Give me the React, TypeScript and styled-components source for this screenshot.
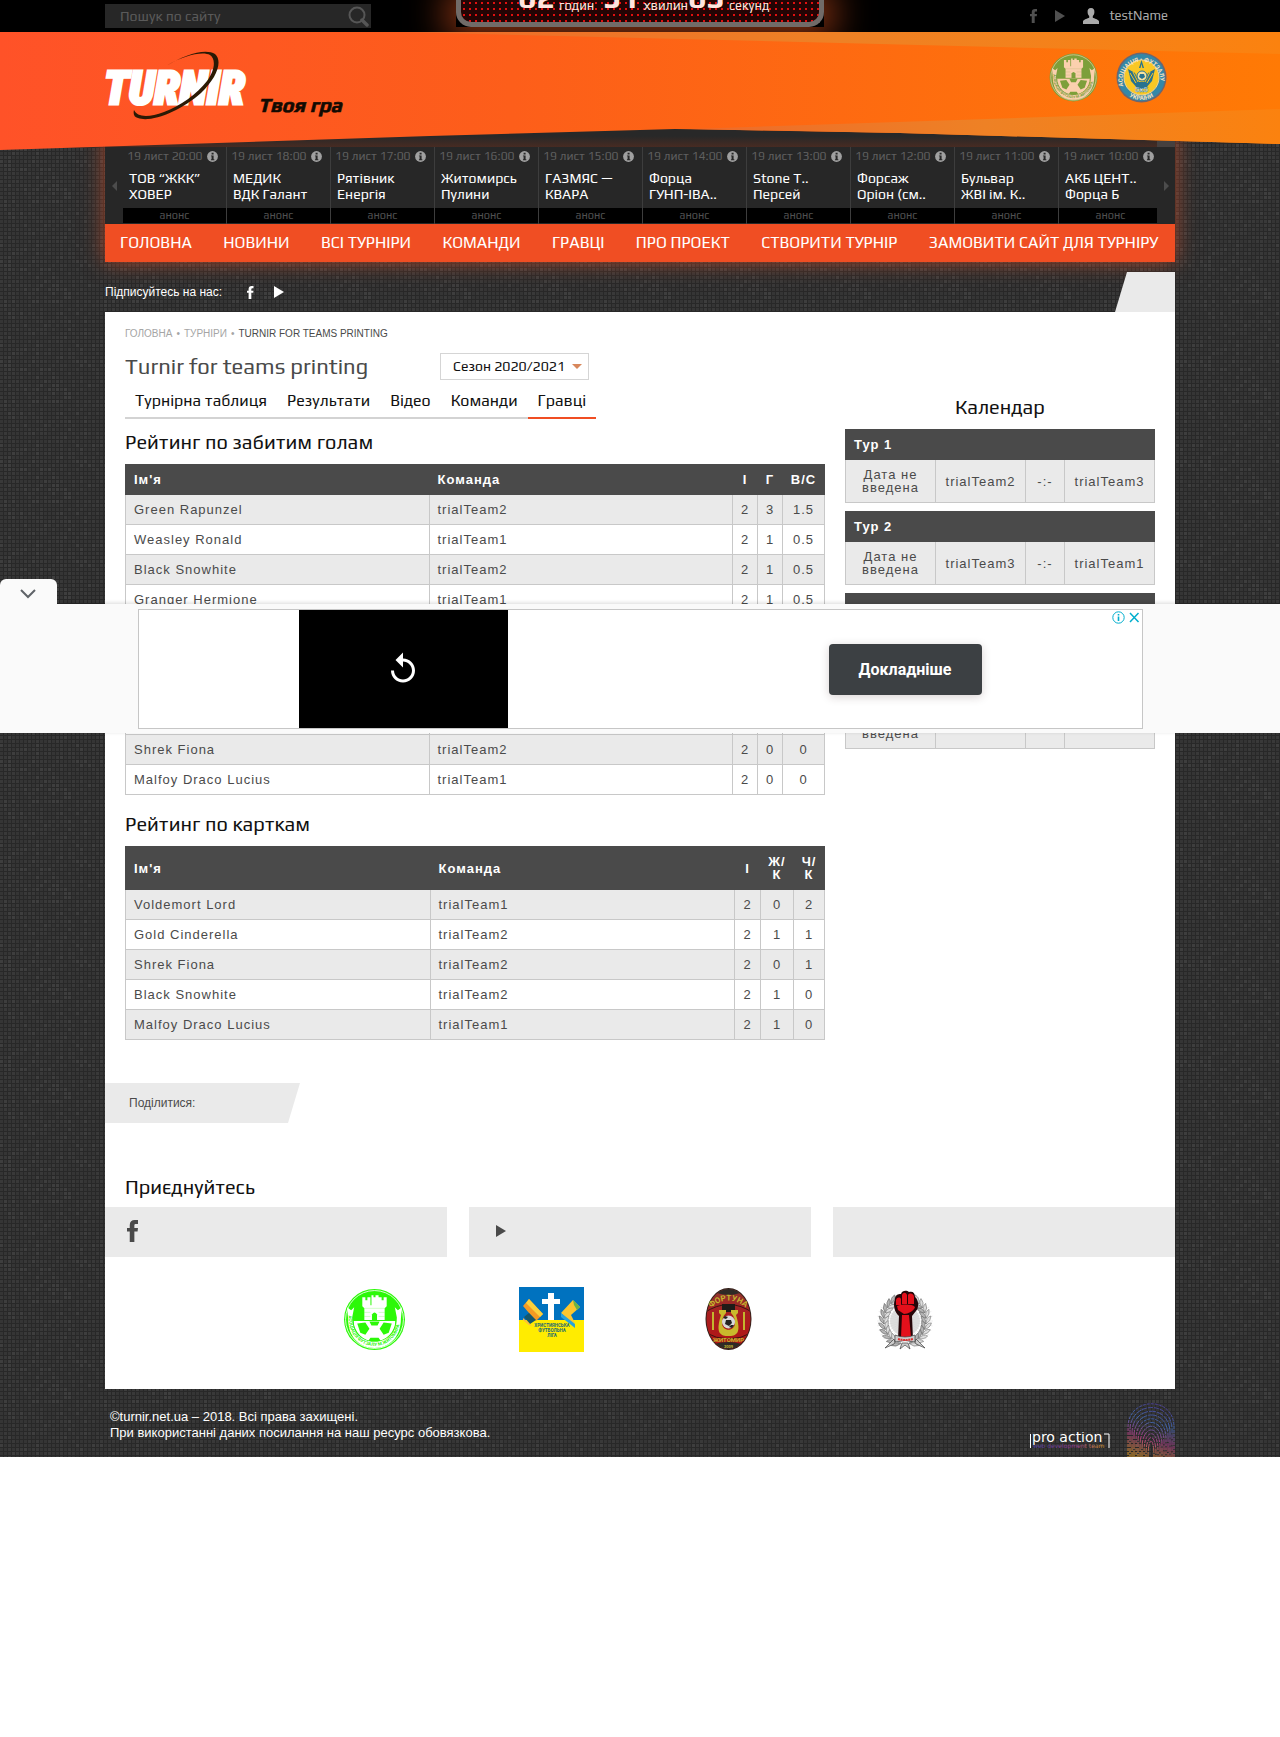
import React from "react";
import styled, { createGlobalStyle } from "styled-components";

const play = `Play, Roboto, "Noto Sans", sans-serif`;
const arial = `"Liberation Sans", Arial, sans-serif`;

/* Woven dark backdrop: 3px cells on a 4px grid, some of them lighter */
const weave = (() => {
  let cells = "";
  let seed = 7;
  for (let y = 0; y < 100; y += 4) {
    for (let x = 0; x < 100; x += 4) {
      seed = (seed * 1103515245 + 12345) % 2147483648;
      const n = (seed >> 12) % 10;
      const tone = n === 0 ? "#3e3e3e" : n < 4 ? "#393939" : "#353535";
      cells += `<rect x='${x}' y='${y}' width='3' height='3' fill='${tone}'/>`;
    }
  }
  const svg = `<svg xmlns='http://www.w3.org/2000/svg' width='100' height='100'><rect width='100' height='100' fill='#282828'/>${cells}</svg>`;
  return `url("data:image/svg+xml,${encodeURIComponent(svg).replace(/'/g, "%27")}")`;
})();

const Global = createGlobalStyle`
  *, *::before, *::after { box-sizing: border-box; }
  body { margin: 0; background: #fff; font-family: ${arial}; color: #4a4a4a; }
  a { color: inherit; text-decoration: none; }
  button { border: 0; padding: 0; background: none; cursor: pointer; }
  svg { display: block; }
`;

const Page = styled.div`
  position: relative;
  background: #2f2f2f ${weave};
`;

const Container = styled.div`
  width: 100%;
  max-width: 1070px;
  margin: 0 auto;
`;

/* ---------- top bar ---------- */
const TopBar = styled.div`
  position: relative;
  height: 32px;
  background: #000;
  overflow: hidden;
`;
const TopRow = styled(Container)`
  display: flex;
  justify-content: space-between;
  align-items: center;
  height: 32px;
`;
const Search = styled.form`
  display: flex;
  align-items: center;
  width: 266px;
  height: 24px;
  padding: 0 2px 0 15px;
  background: #272727;
`;
const SearchInput = styled.input`
  flex: 1;
  min-width: 0;
  padding: 0;
  border: 0;
  outline: 0;
  background: none;
  font: 14px/24px ${play};
  color: #aaa;
  &::placeholder { color: #5a5a5a; opacity: 1; }
`;
const UserLinks = styled.div`
  display: flex;
  align-items: center;
  gap: 18px;
  padding-right: 7px;
  color: #505050;
`;
const UserName = styled.a`
  display: flex;
  align-items: center;
  gap: 10px;
  font: 13px/24px ${play};
  color: #aaa;
`;
const Countdown = styled.div`
  position: absolute;
  top: 0;
  left: 50%;
  width: 368px;
  height: 27px;
  margin-left: -184px;
  background: #000;
  box-shadow: 0 0 36px 10px #8a3413;
`;
const Board = styled.div`
  height: 27px;
  padding: 0 0 0 57px;
  border: solid #716b68;
  border-width: 0 5px 5px;
  border-radius: 0 0 15px 15px;
  background: #240404 radial-gradient(circle, #e01010 0 1px, transparent 1px) 0 0 / 6px 6px;
  display: grid;
  grid-template-columns: repeat(3, 85px);
  align-items: end;
`;
const Unit = styled.div`
  display: flex;
  align-items: flex-end;
  height: 22px;
  color: #ffe4de;
  white-space: nowrap;
`;
const Digits = styled.b`
  width: 41px;
  height: 41px;
  font: bold 32px/32px ${play};
`;
const UnitName = styled.span`
  font: 13px/15px ${play};
  height: 24px;
`;

/* ---------- header ---------- */
const Header = styled.header`
  position: relative;
  z-index: 1;
  height: 118px;
  margin-bottom: -21px;
`;
const Ribbon = styled.svg`
  position: absolute;
  inset: 0;
  width: 100%;
  height: 100%;
`;
const HeaderRow = styled(Container)`
  position: relative;
  display: flex;
  justify-content: space-between;
  align-items: flex-start;
  padding: 19px 8px 0 0;
`;
const Emblems = styled.div`
  display: flex;
  gap: 17px;
  padding-top: 1px;
`;

/* ---------- ticker and navigation ---------- */
const Glow = styled(Container)`
  box-shadow: 0 0 20px rgba(240, 84, 40, 0.6);
`;
const TickerTop = styled.div`
  height: 18px;
  background:
    linear-gradient(#45403f 0 0) right bottom / 18px 6px no-repeat,
    linear-gradient(#282828 40%, #472b22);
`;
const Ticker = styled.div`
  display: grid;
  grid-template-columns: 18px minmax(0, 1fr) 18px;
  height: 77px;
  background: #272727;
`;
const Arrow = styled.button`
  display: grid;
  place-items: center;
  color: #4c4c4c;
`;
const Games = styled.div`
  display: flex;
  overflow: hidden;
`;
const Game = styled.a`
  flex: 0 0 104px;
  width: 104px;
  border-right: 1px solid #3d3d3d;
  font-family: ${play};
`;
const GameDate = styled.div`
  display: flex;
  align-items: center;
  justify-content: space-between;
  height: 18px;
  padding: 0 8px 0 4px;
  font-size: 12px;
  line-height: 18px;
  color: #5f5f5f;
  white-space: nowrap;
`;
const Sides = styled.div`
  height: 43px;
  padding: 5px 0 0 6px;
  font-size: 14px;
  line-height: 16px;
  color: #fff;
  white-space: pre;
`;
const Announce = styled.div`
  height: 15px;
  background: #000;
  font-size: 11px;
  line-height: 14px;
  text-align: center;
  color: #505050;
`;
const Nav = styled.nav`
  display: flex;
  justify-content: space-between;
  height: 38px;
  padding: 0 17px 0 15px;
  background: #f04e23;
  font: 16px/37px ${play};
  color: #fff;
  white-space: nowrap;
`;

const Follow = styled(Container)`
  display: flex;
  align-items: flex-end;
  justify-content: space-between;
  height: 50px;
  font-size: 12px;
  color: #fff;
`;
const FollowLinks = styled.div`
  display: flex;
  align-items: center;
  gap: 20px;
  height: 40px;
`;
const FollowText = styled.span`
  margin-right: 5px;
`;
const Corner = styled.div`
  width: 60px;
  height: 40px;
  background: #eaeaea;
  clip-path: polygon(12px 0, 100% 0, 100% 100%, 0 100%);
`;

/* ---------- content ---------- */
const Content = styled(Container)`
  padding-top: 16px;
  background: #fff;
`;
const Crumbs = styled.nav`
  display: flex;
  gap: 4px;
  padding: 0 20px;
  margin-bottom: 13px;
  font-size: 10px;
  line-height: 12px;
  color: #a5a5a5;
  text-transform: uppercase;
`;
const Current = styled.span`
  color: #4a4a4a;
`;
const Columns = styled.div`
  display: grid;
  grid-template-columns: minmax(0, 1fr) 310px;
  gap: 20px;
  align-items: start;
  padding: 0 20px;
`;
const TitleRow = styled.div`
  display: grid;
  grid-template-columns: 315px auto;
  justify-content: start;
  align-items: start;
  height: 27px;
  margin-bottom: 6px;
`;
const Title = styled.h1`
  margin: 0;
  font: 22px/26px ${play};
  color: #4a4a4a;
  white-space: nowrap;
`;
const Season = styled.label`
  position: relative;
  display: flex;
  align-items: center;
  width: 149px;
  height: 27px;
  border: 1px solid #d5d5d5;
`;
const SeasonSelect = styled.select`
  width: 100%;
  height: 25px;
  padding: 0 0 0 12px;
  border: 0;
  appearance: none;
  background: none;
  font: 14px/25px ${play};
  color: #111;
`;
const Caret = styled.svg`
  position: absolute;
  right: 6px;
  pointer-events: none;
`;
const Tabs = styled.nav`
  display: flex;
  font: 16px/29px ${play};
  color: #111;
`;
const Tab = styled.a<{ $active?: boolean }>`
  padding: 0 10px 2px;
  border-bottom: 2px solid ${(p) => (p.$active ? "#f04e23" : "#d3d3d3")};
`;
const Heading = styled.h2<{ $center?: boolean; $top?: number }>`
  margin: ${(p) => p.$top || 0}px 0 0;
  font: 20px/45px ${play};
  color: #111;
  text-align: ${(p) => (p.$center ? "center" : "left")};
`;
const Table = styled.table`
  width: 100%;
  table-layout: fixed;
  border-collapse: collapse;
  font-size: 13px;
  line-height: 13px;
  letter-spacing: 1px;
  & + & { margin-top: 8px; }
  tbody tr:nth-child(odd) { background: #eaeaea; }
`;
const Th = styled.th<{ $left?: boolean }>`
  padding: 8px ${(p) => (p.$left ? 8 : 3)}px;
  border: 1px solid #4a4a4a;
  background: #4a4a4a;
  color: #fff;
  text-align: ${(p) => (p.$left ? "left" : "center")};
`;
const Td = styled.td<{ $left?: boolean }>`
  padding: 8px ${(p) => (p.$left ? 8 : 3)}px;
  border: 1px solid #c8c8c8;
  text-align: ${(p) => (p.$left ? "left" : "center")};
`;
const Share = styled.div`
  width: 195px;
  margin-top: 43px;
  padding-left: 24px;
  background: #eaeaea;
  clip-path: polygon(0 0, 100% 0, calc(100% - 12px) 100%, 0 100%);
  font-size: 12px;
  line-height: 40px;
`;
const Join = styled.h2`
  margin: 44px 0 0;
  padding: 0 20px;
  font: 20px/40px ${play};
  color: #111;
`;
const JoinGrid = styled.div`
  display: grid;
  grid-template-columns: repeat(3, 1fr);
  gap: 22px;
`;
const JoinBox = styled.a<{ $indent?: number }>`
  display: flex;
  align-items: center;
  height: 50px;
  padding: 0 ${(p) => p.$indent || 22}px 2px;
  background: #eaeaea;
  color: #4a4a4a;
`;
const Partners = styled.div`
  display: grid;
  grid-template-columns: repeat(4, 65px);
  justify-content: center;
  column-gap: 112px;
  padding: 30px 0 37px;
`;

/* ---------- footer ---------- */
const Footer = styled(Container)`
  display: flex;
  justify-content: space-between;
  align-items: flex-end;
  height: 68px;
  padding-left: 5px;
  color: #fff;
`;
const Copyright = styled.p`
  margin: 0;
  align-self: flex-start;
  padding-top: 20px;
  font-size: 13px;
  line-height: 16px;
`;
const Studio = styled.a`
  display: flex;
  align-items: flex-end;
  gap: 17px;
`;

/* ---------- sticky advert laid over the page ---------- */
const Advert = styled.aside`
  position: absolute;
  z-index: 2;
  top: 604px;
  left: 0;
  right: 0;
  padding: 5px 0 4px;
  background: #fafafa;
  box-shadow: 0 -1px 4px rgba(0, 0, 0, 0.15);
`;
const Collapse = styled.button`
  position: absolute;
  left: 0;
  bottom: 100%;
  display: grid;
  place-items: center;
  width: 57px;
  height: 25px;
  padding: 4px 2px 0 0;
  border-radius: 6px 6px 0 0;
  background: #fafafa;
`;
const Creative = styled.div`
  position: relative;
  display: grid;
  grid-template-columns: 160px 209px 1fr;
  width: 1005px;
  height: 120px;
  max-width: 100%;
  margin: 0 auto;
  border: 1px solid #c6c6c6;
  background: #fff;
`;
const Video = styled.button`
  grid-column: 2;
  display: grid;
  place-items: center;
  background: #000;
`;
const Offer = styled.div`
  display: grid;
  place-items: center;
  padding-left: 161px;
`;
const More = styled.button`
  width: 153px;
  height: 51px;
  border-radius: 4px;
  background: #3c4043;
  box-shadow: 0 2px 10px rgba(60, 30, 30, 0.2);
  color: #fff;
  font: bold 16px/51px Roboto, sans-serif;
`;
const AdControls = styled.div`
  position: absolute;
  top: 1px;
  right: 2px;
  display: flex;
  gap: 3px;
`;

/* ---------- drawings ---------- */
const Fb = ({ h }: { h: number }) => (
  <svg width={h / 2} height={h} viewBox="0 0 10 20" fill="currentColor" aria-hidden="true">
    <path d="M2.500 20V10.500H0V7.200h2.500V4.600C2.500 1.500 4.300 0 7 0h3v3.600H8.200C7.200 3.600 6.700 4 6.700 5v2.200H10l-.4 3.300H6.700V20z" />
  </svg>
);
const PlayIcon = () => (
  <svg width="10" height="12" viewBox="0 0 10 12" fill="currentColor" aria-hidden="true">
    <path d="M0 0l10 6-10 6z" />
  </svg>
);
const InfoIcon = () => (
  <svg width="11" height="11" viewBox="0 0 12 12" aria-hidden="true">
    <circle cx="6" cy="6" r="5.900" fill="#a0a0a0" />
    <path d="M5 1.800h2.200v2H5zM4.300 4.800h2.900V9h.8v1H4.300V9H5V5.700h-.7z" fill="#272727" />
  </svg>
);

const TurnirLogo = () => (
  <svg width="240" height="72" viewBox="0 0 240 72" role="img" aria-label="Turnir">
    <text x="-1" y="53" fontFamily="'Liberation Sans Narrow','Roboto Condensed',sans-serif" fontSize="46" fontWeight="900" fontStyle="italic" fill="#fff" stroke="#fff" strokeWidth="3">TURNIR</text>
    <path d="M61 15C80 3 101-3 110 3c8 7 2 24-14 39C76 60 46 72 33 67c-4-1-5-4-4-8 3 7 14 8 30 2 16-6 33-18 43-31 8-11 9-22 3-26-7-4-26 0-44 11z" fill="#2b1a05" />
    <text x="153" y="61" fontFamily="Play, sans-serif" fontSize="20" fontWeight="bold" fontStyle="italic" fill="#120a02" stroke="#120a02" strokeWidth=".6">Твоя гра</text>
  </svg>
);

const CastleLogo = ({ size, green, light, id }: { size: number; green: string; light: string; id: string }) => (
  <svg width={size} height={size} viewBox="0 0 64 64" role="img" aria-label="Асоціація футзалу">
    <circle cx="32" cy="32" r="30" fill={green} />
    <circle cx="32" cy="32" r="28.500" fill="none" stroke={light} strokeWidth=".8" />
    <path d="M20 10h3v3h2v-3h3v8h1V8h2v2h2V8h3v10h0v-8h3v3h2v-3h3v9l-2 2v12H22V21l-2-2z" fill={light} />
    <path d="M29.500 33v-6q2.500-4 5 0v6z" fill={green} />
    <path d="M22 21h20M22 25h6M36 25h6M22 29h6M36 29h6" stroke={green} strokeWidth=".4" opacity=".5" />
    <path d="M11 33h42a21 21 0 0 1-42 0z" fill={light} stroke={green} strokeWidth="1" />
    <path d="M15 36l8-1 4 6-4 6-5-2zM49 36l-8-1-4 6 4 6 5-2zM28 50h8l2 3q-6 2-12 0zM27 34h10l-2 4h-6z" fill={green} />
    <path d="M5 20l4 3 3-3-2 10c0 20 15 24 22 24s22-4 22-24l-2-10 3 3 4-3-1 11c0 20-13 29-26 29S6 51 6 31z" fill={light} />
    <path id={id} d="M6.500 28C6 68 58 68 57.500 28" fill="none" />
    <text fontFamily="Roboto, sans-serif" fontSize="4.500" fontWeight="bold" fill={green}>
      <textPath href={`#${id}`}>АСОЦІАЦІЯ ФУТЗАЛУ М.ЖИТОМИРА</textPath>
    </text>
  </svg>
);

const UkraineLogo = () => (
  <svg width="51" height="51" viewBox="0 0 51 51" role="img" aria-label="Асоціація футзалу України">
    <circle cx="25.500" cy="25.500" r="25" fill="#6d6670" />
    <circle cx="25.500" cy="25.500" r="23.500" fill="#3488a8" />
    <circle cx="25.500" cy="25.500" r="17.500" fill="#f9c825" stroke="#f3d38e" />
    <path d="M12 17l7 4 4 9h5l4-9 7-4-3 12-7 8h-7l-7-8zM23 16l2.500-8 2.500 8h-1.500l-1-4-1 4z" fill="#27728f" />
    <path d="M14 21l6 10M37 21l-6 10M17 20l5 10M34 20l-5 10" stroke="#f9c825" />
    <circle cx="26" cy="24" r="5" fill="#f5e2a0" stroke="#27728f" />
    <path d="M24 22h4l1 3-3 2-3-2z" fill="#27728f" />
    <text x="25.500" y="40" textAnchor="middle" fontFamily="Roboto, sans-serif" fontSize="8" fontWeight="bold" fill="#fff" stroke="#27728f" strokeWidth=".4">5x5</text>
    <path id="ring-top" d="M8 36A19 19 0 1 1 43 36" fill="none" />
    <path id="ring-bottom" d="M10 42A23 23 0 0 0 41 42" fill="none" />
    <g fontFamily="Roboto, sans-serif" fontSize="6" fontWeight="bold" fill="#fbe3c0">
      <text><textPath href="#ring-top" startOffset="2">АСОЦІАЦІЯ • ФУТЗАЛУ</textPath></text>
      <text><textPath href="#ring-bottom" startOffset="4">УКРАЇНИ</textPath></text>
    </g>
  </svg>
);

const ChristianLogo = () => (
  <svg width="65" height="65" viewBox="0 0 65 65" role="img" aria-label="Християнська футбольна ліга">
    <path fill="#0072bf" d="M0 0h65v33H0z" />
    <path fill="#ffec00" d="M0 33h65v32H0z" />
    <path fill="#fff" d="M29 6h6v6h6v5h-6v16h-6V17h-6v-5h6z" />
    <path fill="#f59a23" d="M4 19l6-7 14 15-7 7z" />
    <path fill="#fcd13c" d="M10 12l14 15-3 3L7 16z" />
    <path fill="#15576b" d="M10 26l7 7-6 4-6-7z" />
    <path fill="#fdb44b" d="M4 31l9 8-3-1-6-5z" />
    <path fill="#fcc630" d="M54 13l7 7-9 8 4 8-4-1-10-9z" />
    <path fill="#6cb544" d="M54 13l7 7-3 3-3-5z" />
    <path fill="#27a3dd" d="M42 26l14 11v4l-14-11z" />
    <g fontFamily="Roboto, sans-serif" fontSize="4.500" fontWeight="bold" fill="#1b6a76" textAnchor="middle">
      <text x="33" y="40">ХРИСТИЯНСЬКА</text>
      <text x="33" y="45">ФУТБОЛЬНА</text>
      <text x="33" y="50">ЛІГА</text>
    </g>
  </svg>
);

const FortunaLogo = () => (
  <svg width="65" height="65" viewBox="0 0 65 65" role="img" aria-label="Фортуна Житомир">
    <defs>
      <linearGradient id="fortuna" x1="0" x2="0" y1="0" y2="1">
        <stop offset="0" stopColor="#8a3a30" />
        <stop offset=".4" stopColor="#a82020" />
        <stop offset="1" stopColor="#b51212" />
      </linearGradient>
      <clipPath id="fortuna-oval"><ellipse cx="32.500" cy="32" rx="22" ry="30" /></clipPath>
    </defs>
    <ellipse cx="32.500" cy="32" rx="23" ry="31" fill="#33201a" />
    <g clipPath="url(#fortuna-oval)">
      <path fill="url(#fortuna)" d="M0 0h65v65H0z" />
      <path fill="#2e2a26" d="M21 0h23v6q-11 4-23 0zM18 57q14-4 28 0v8H18z" />
      <path fill="none" stroke="#3a1512" strokeWidth="1" d="M8 26q25-17 49 0v19q-24 14-49 0z" />
    </g>
    <path d="M17 25v18M48 25v18" stroke="#c3b52e" strokeWidth="2" />
    <path d="M26 17h13v8H26z" fill="#1e1b18" />
    <path d="M23 23h7v3c-3 3-4 6-4 10 0 9 13 9 13 0 0-4-1-7-4-10v-3h7v3l-2 2c6 19 0 21-7.500 21S19 47 25 28l-2-2z" fill="#c9b92c" />
    <circle cx="32.500" cy="35" r="6.500" fill="#d8d8d8" />
    <path d="M30 33h5l1 3-3 3-4-2zM27 31l2-2 3 1-2 2zM38 38l-2 3-3-1 2-2z" fill="#222" />
    <path id="fort-top" d="M15 21Q32 6 50 21" fill="none" />
    <g fontFamily="Roboto, sans-serif" fontWeight="bold" fill="#c3b52e">
      <text fontSize="8"><textPath href="#fort-top">ФОРТУНА</textPath></text>
      <text x="32.500" y="55" fontSize="6" textAnchor="middle">ЖИТОМИР</text>
      <text x="32.500" y="61" fontSize="4" textAnchor="middle">2009</text>
    </g>
  </svg>
);

const leaves = Array.from({ length: 10 }, (_, i) => {
  const deg = 20 + i * 14;
  const a = (Math.PI * deg) / 180;
  return { x: Math.sin(a) * 21, y: Math.cos(a) * 23, r: deg };
});
const FistLogo = () => (
  <svg width="65" height="65" viewBox="0 0 65 65" role="img" aria-label="Кулак у лавровому вінку">
    <g stroke="#d5d5d5" strokeWidth=".4">
      {Array.from({ length: 36 }, (_, i) => (
        <path key={i} d="M32 34V6" transform={`rotate(${i * 10} 32 34)`} />
      ))}
    </g>
    <circle cx="32" cy="34" r="15" fill="#d0d0d0" opacity=".7" />
    {[1, -1].map((s) =>
      leaves.map((l, i) => (
        <g key={`${s}${i}`} transform={`translate(${32 + s * l.x} ${34 + l.y}) rotate(${s * (90 - l.r)})`}>
          <path d="M0 3Q-5 0-5-5Q0-4 0 3z" fill="#b5b5b5" stroke="#555" strokeWidth=".5" />
          <path d="M0 3Q5 0 5-5Q0-4 0 3z" fill="#dedede" stroke="#666" strokeWidth=".5" />
        </g>
      ))
    )}
    <path d="M22 12c0-4 3-5 6-5 1-4 6-4 8-2 4-1 6 1 6 5 4 3 4 11 1 14l-4 5 1 24H25l1-24c-5-4-6-12-4-17z" fill="#250508" />
    <path d="M23 13c1-3 4-3 5-1v6h-5zM29 8c1-3 4-3 5 0v9h-5zM35 8c2-3 6-1 6 2v7h-6zM24 19c6-2 15-2 18 1-1 4-7 7-11 7l-6-4zM29 28h7l2 22h-10z" fill="#e3101b" />
    <path d="M22 48q10 4 20 0v7q-10-3-20 0zM21 52l-9 9 9-4 1-2zM43 52l9 9-9-4-1-2zM29 56l-2 6 5-4 5 4-2-6z" fill="#ccc" stroke="#444" strokeWidth=".7" />
    <path d="M25 52q7 2 15 0" stroke="#d33" strokeWidth="2" strokeDasharray="2 .6" fill="none" />
  </svg>
);

const Fingerprint = () => (
  <svg width="48" height="54" viewBox="0 0 48 54" fill="none" stroke="url(#print)" strokeWidth="1" aria-hidden="true">
    <defs>
      <linearGradient id="print" gradientUnits="userSpaceOnUse" x1="30" y1="0" x2="12" y2="54">
        <stop offset="0" stopColor="#4b3d8f" />
        <stop offset=".35" stopColor="#3f64a8" />
        <stop offset=".65" stopColor="#a83b80" />
        <stop offset="1" stopColor="#e09a25" />
      </linearGradient>
    </defs>
    {Array.from({ length: 11 }, (_, i) => (
      <path
        key={i}
        d={`M${1 + i * 2} 56V${24 + i * 3}C${1 + i * 2} ${i * 4 - 6} ${47 - i * 2} ${i * 4 - 8} ${47 - i * 2} ${24 + i * 3}V56`}
        strokeDasharray={`${3 + (i % 4) * 2} 1`}
      />
    ))}
  </svg>
);

const ProAction = () => (
  <svg width="80" height="25" viewBox="0 0 80 25" role="img" aria-label="pro action web development team">
    <defs>
      <linearGradient id="team"><stop offset="0" stopColor="#4b3fa0" /><stop offset=".6" stopColor="#9a3f95" /><stop offset="1" stopColor="#e09a25" /></linearGradient>
    </defs>
    <path d="M.5 2v14M74 2h5v14" stroke="#fff" fill="none" />
    <text x="2" y="10" fontFamily="'DejaVu Sans',sans-serif" fontSize="14" fill="#fff">pro action</text>
    <text x="3" y="16" fontFamily="'DejaVu Sans',sans-serif" fontSize="6" fill="url(#team)">web development team</text>
  </svg>
);

/* ---------- data ---------- */
const games: [string, string, string][] = [
  ["20:00", "ТОВ “ЖКК”", "ХОВЕР"],
  ["18:00", "МЕДИК", "ВДК Галант"],
  ["17:00", "Рятівник", "Енергія"],
  ["16:00", "Житомирсь", "Пулини"],
  ["15:00", "ГАЗМЯС —", "КВАРА"],
  ["14:00", "Форца", "ГУНП-ІВА.."],
  ["13:00", "Stone T..", "Персей"],
  ["12:00", "Форсаж", "Оріон (см.."],
  ["11:00", "Бульвар", "ЖВІ ім. К.."],
  ["10:00", "АКБ ЦЕНТ..", "Форца Б"],
];
const menu = ["ГОЛОВНА", "НОВИНИ", "ВСІ ТУРНІРИ", "КОМАНДИ", "ГРАВЦІ", "ПРО ПРОЕКТ", "СТВОРИТИ ТУРНІР", "ЗАМОВИТИ САЙТ ДЛЯ ТУРНІРУ"];
const tabs = ["Турнірна таблиця", "Результати", "Відео", "Команди", "Гравці"];
const scorers = [
  ["Green Rapunzel", "trialTeam2", "2", "3", "1.5"],
  ["Weasley Ronald", "trialTeam1", "2", "1", "0.5"],
  ["Black Snowhite", "trialTeam2", "2", "1", "0.5"],
  ["Granger Hermione", "trialTeam1", "2", "1", "0.5"],
  ["Gold Cinderella", "trialTeam2", "2", "1", "0.5"],
  ["Voldemort Lord", "trialTeam1", "2", "1", "0.5"],
  ["Potter Harry", "trialTeam1", "2", "0", "0"],
  ["Brave Merida", "trialTeam2", "2", "0", "0"],
  ["Shrek Fiona", "trialTeam2", "2", "0", "0"],
  ["Malfoy Draco Lucius", "trialTeam1", "2", "0", "0"],
];
const cards = [
  ["Voldemort Lord", "trialTeam1", "2", "0", "2"],
  ["Gold Cinderella", "trialTeam2", "2", "1", "1"],
  ["Shrek Fiona", "trialTeam2", "2", "0", "1"],
  ["Black Snowhite", "trialTeam2", "2", "1", "0"],
  ["Malfoy Draco Lucius", "trialTeam1", "2", "1", "0"],
];
const tours = [
  ["trialTeam2", "trialTeam3"],
  ["trialTeam3", "trialTeam1"],
  ["trialTeam1", "trialTeam2"],
  ["trialTeam3", "trialTeam2"],
];

const Rating = ({ head, rows, widths }: { head: React.ReactNode[]; rows: string[][]; widths: (number | undefined)[] }) => (
  <Table>
    <colgroup>{widths.map((w, i) => <col key={i} width={w} />)}</colgroup>
    <thead>
      <tr>{head.map((h, i) => <Th key={i} $left={i < 2}>{h}</Th>)}</tr>
    </thead>
    <tbody>
      {rows.map((r) => (
        <tr key={r[0]}>{r.map((c, i) => <Td key={i} $left={i < 2}>{c}</Td>)}</tr>
      ))}
    </tbody>
  </Table>
);

export default function App() {
  return (
    <Page>
      <Global />
      <TopBar>
        <Countdown>
          <Board>
            <Unit><Digits>02</Digits><UnitName>годин</UnitName></Unit>
            <Unit><Digits>51</Digits><UnitName>хвилин</UnitName></Unit>
            <Unit><Digits>03</Digits><UnitName>секунд</UnitName></Unit>
          </Board>
        </Countdown>
        <TopRow>
          <Search>
            <SearchInput aria-label="Пошук по сайту" placeholder="Пошук по сайту" />
            <button type="button" aria-label="Шукати">
              <svg width="21" height="21" viewBox="0 0 21 21" fill="none" stroke="#565656">
                <circle cx="9" cy="9" r="7.500" strokeWidth="2" />
                <path d="M14 14l5 5" strokeWidth="3.500" strokeLinecap="round" />
              </svg>
            </button>
          </Search>
          <UserLinks>
            <a href="#facebook" aria-label="Facebook"><Fb h={14} /></a>
            <a href="#youtube" aria-label="YouTube"><PlayIcon /></a>
            <UserName href="#profile">
              <svg width="16" height="16" viewBox="0 0 16 16" fill="#aaa" aria-hidden="true">
                <path d="M8 0c2.600 0 3.600 1.800 3.400 4.200C11.300 6 10.700 7.200 9.800 8v1.700c1.500.9 5.400 1.300 6.200 3.500V16H0v-2.800c.8-2.200 4.700-2.600 6.200-3.500V8c-.9-.8-1.500-2-1.600-3.800C4.400 1.800 5.400 0 8 0z" />
              </svg>
              testName
            </UserName>
          </UserLinks>
        </TopRow>
      </TopBar>

      <Header>
        <Ribbon viewBox="0 0 1280 118" preserveAspectRatio="none" aria-hidden="true">
          <defs>
            <linearGradient id="flame"><stop offset="0" stopColor="#ff5228" /><stop offset=".4" stopColor="#fd5e1a" /><stop offset="1" stopColor="#ff7a05" /></linearGradient>
            <linearGradient id="amber"><stop offset="0" stopColor="#ee6a2a" /><stop offset=".5" stopColor="#ee8125" /><stop offset="1" stopColor="#fb820f" /></linearGradient>
          </defs>
          <path d="M0 0h1280v112L900 101 675 97 430 104 0 118z" fill="url(#flame)" />
          <path d="M400 0h880v22z" fill="url(#amber)" />
          <path d="M690 97l590-20v35L900 101z" fill="url(#amber)" />
        </Ribbon>
        <HeaderRow>
          <a href="#home"><TurnirLogo /></a>
          <Emblems>
            <CastleLogo size={51} green="#7d9f3a" light="#fbd0ae" id="castle-small" />
            <UkraineLogo />
          </Emblems>
        </HeaderRow>
      </Header>

      <Glow>
        <TickerTop />
        <Ticker>
          <Arrow aria-label="Назад"><svg width="5" height="10" viewBox="0 0 5 10"><path d="M5 0v10L0 5z" fill="currentColor" /></svg></Arrow>
          <Games>
            {games.map(([time, home, away]) => (
              <Game key={time} href="#game">
                <GameDate>19 лист {time}<InfoIcon /></GameDate>
                <Sides>{home}{"\n"}{away}</Sides>
                <Announce>анонс</Announce>
              </Game>
            ))}
          </Games>
          <Arrow aria-label="Вперед"><svg width="5" height="10" viewBox="0 0 5 10"><path d="M0 0v10l5-5z" fill="currentColor" /></svg></Arrow>
        </Ticker>
        <Nav>{menu.map((m) => <a key={m} href="#menu">{m}</a>)}</Nav>
      </Glow>

      <Follow>
        <FollowLinks>
          <FollowText>Підписуйтесь на нас:</FollowText>
          <a href="#facebook" aria-label="Facebook"><Fb h={13} /></a>
          <a href="#youtube" aria-label="YouTube"><PlayIcon /></a>
        </FollowLinks>
        <Corner />
      </Follow>

      <Content as="main">
        <Crumbs>
          <a href="#home">Головна</a><span>•</span><a href="#tournaments">Турніри</a><span>•</span>
          <Current>Turnir for teams printing</Current>
        </Crumbs>
        <Columns>
          <section>
            <TitleRow>
              <Title>Turnir for teams printing</Title>
              <Season>
                <SeasonSelect aria-label="Сезон"><option>Сезон 2020/2021</option></SeasonSelect>
                <Caret width="10" height="5" viewBox="0 0 10 5"><path d="M0 0h10L5 5z" fill="#d8875c" /></Caret>
              </Season>
            </TitleRow>
            <Tabs>{tabs.map((t) => <Tab key={t} href="#tab" $active={t === "Гравці"}>{t}</Tab>)}</Tabs>
            <Heading>Рейтинг по забитим голам</Heading>
            <Rating head={["Ім'я", "Команда", "І", "Г", "В/С"]} rows={scorers} widths={[undefined, undefined, 25, 25, 42]} />
            <Heading $top={6}>Рейтинг по карткам</Heading>
            <Rating head={["Ім'я", "Команда", "І", <>Ж/<br />К</>, <>Ч/<br />К</>]} rows={cards} widths={[undefined, undefined, 26, 33, 31]} />
          </section>
          <section>
            <Heading $center $top={31}>Календар</Heading>
            {tours.map(([a, b], i) => (
              <Table key={i}>
                <colgroup><col width="90" /><col width="90" /><col width="39" /><col /></colgroup>
                <thead><tr><Th $left colSpan={4}>Тур {i + 1}</Th></tr></thead>
                <tbody><tr><Td>Дата не введена</Td><Td>{a}</Td><Td>-:-</Td><Td>{b}</Td></tr></tbody>
              </Table>
            ))}
          </section>
        </Columns>
        <Share>Поділитися:</Share>
        <Join>Приєднуйтесь</Join>
        <JoinGrid>
          <JoinBox href="#facebook" aria-label="Facebook"><Fb h={22} /></JoinBox>
          <JoinBox href="#youtube" aria-label="YouTube" $indent={27}><PlayIcon /></JoinBox>
          <JoinBox href="#join" aria-label="Приєднатися" />
        </JoinGrid>
        <Partners>
          <CastleLogo size={65} green="#2cf808" light="#fff" id="castle-large" />
          <ChristianLogo />
          <FortunaLogo />
          <FistLogo />
        </Partners>
      </Content>

      <Footer as="footer">
        <Copyright>
          ©turnir.net.ua – 2018. Всі права захищені.<br />
          При використанні даних посилання на наш ресурс обовязкова.
        </Copyright>
        <Studio href="#studio"><ProAction /><Fingerprint /></Studio>
      </Footer>

      <Advert>
        <Collapse aria-label="Згорнути">
          <svg width="16" height="10" viewBox="0 0 16 10" fill="none" stroke="#5f6368" strokeWidth="2"><path d="M1 1l7 7 7-7" /></svg>
        </Collapse>
        <Creative>
          <Video aria-label="Повторити">
            <svg width="36" height="36" viewBox="0 0 24 24" fill="#fff"><path d="M12 5V1L7 6l5 5V7c3.310 0 6 2.690 6 6s-2.690 6-6 6-6-2.690-6-6H4c0 4.420 3.580 8 8 8s8-3.580 8-8-3.580-8-8-8z" /></svg>
          </Video>
          <Offer><More>Докладніше</More></Offer>
          <AdControls>
            <button aria-label="Про рекламу">
              <svg width="13" height="13" viewBox="0 0 13 13" fill="none" stroke="#00aecd"><circle cx="6.500" cy="6.500" r="5.700" /><path d="M6.500 5.500V10M6.500 3v1.500" strokeWidth="1.600" /></svg>
            </button>
            <button aria-label="Закрити рекламу">
              <svg width="12" height="13" viewBox="0 0 12 13" stroke="#00aecd" strokeWidth="1.500"><path d="M2 2l8.500 9M10.500 2L2 11" /></svg>
            </button>
          </AdControls>
        </Creative>
      </Advert>
    </Page>
  );
}
